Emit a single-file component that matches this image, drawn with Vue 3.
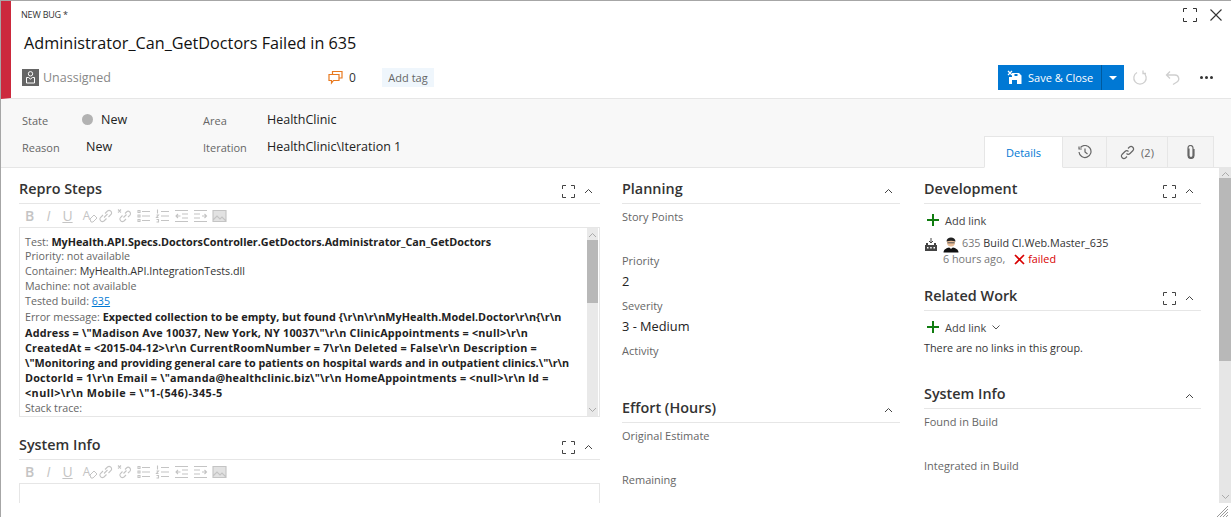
<template>
  <div class="form">
    <header class="head">
      <div class="kind-row">
        <span class="kind">NEW BUG *</span>
        <span class="win-btns">
          <svg width="14" height="14" viewBox="0 0 14 14"><path d="M.5 4V.5H4M10 .5h3.500V4M13.500 10v3.500H10M4 13.500H.5V10" fill="none" stroke="#333"/></svg>
          <svg width="12" height="12" viewBox="0 0 12 12"><path d="M.5.500l11 11M11.500.500l-11 11" fill="none" stroke="#333" stroke-width="1.100"/></svg>
        </span>
      </div>
      <h1 class="title">Administrator_Can_GetDoctors Failed in 635</h1>
      <div class="meta-row">
        <span class="assignee">
          <svg width="17" height="17" viewBox="0 0 17 17"><rect width="17" height="17" fill="#666"/><circle cx="8.500" cy="4.800" r="2.200" fill="none" stroke="#fff"/><path d="M4.500 8.500h2l2 1.500 2-1.500h2v5.500h-8z" fill="none" stroke="#fff"/></svg>
          <span>Unassigned</span>
        </span>
        <span class="comments">
          <svg width="15" height="15" viewBox="0 0 15 15"><path d="M4.500 4V1.500h9.500v6.500h-3M1 4.500h10v6H5.500L3.500 13v-2.500H1z" fill="none" stroke="#e8791f" stroke-width="1.200"/></svg>
          <span>0</span>
        </span>
        <span class="tag">Add tag</span>
        <span class="actions">
          <span class="save">
            <span class="save-main">
              <svg width="15" height="15" viewBox="0 0 15 15"><path d="M5 3h7l2.500 2.500V14H2V7h3z" fill="#fff"/><path d="M5 10h5v4H5zM7.500 4h3v2h-3z" fill="#0078d4"/><path d="M1 1l4 4M5 1L1 5" stroke="#fff" stroke-width="1.200"/></svg>
              Save &amp; Close
            </span>
            <span class="save-arrow"><i></i></span>
          </span>
          <svg class="act" width="16" height="16" viewBox="0 0 16 16"><path d="M11 2.500A6.200 6.200 0 1 1 5 2.500M11 .5v3h3" fill="none" stroke="#cfcfcf" stroke-width="1.300"/></svg>
          <svg class="act" width="16" height="16" viewBox="0 0 16 16"><path d="M5 1.500L1.500 5 5 8.500M2 5h8a3.800 3.800 0 0 1 2 7l-4 2.500" fill="none" stroke="#cfcfcf" stroke-width="1.300"/></svg>
          <span class="dots"><i></i><i></i><i></i></span>
        </span>
      </div>
    </header>

    <section class="band">
      <div class="fields">
        <span class="f-label">State</span>
        <span class="f-value state"><i class="dot"></i>New</span>
        <span class="f-label">Area</span>
        <span class="f-value">HealthClinic</span>
        <span class="f-label">Reason</span>
        <span class="f-value reason">New</span>
        <span class="f-label">Iteration</span>
        <span class="f-value">HealthClinic\Iteration 1</span>
      </div>
      <nav class="tabs">
        <span class="tab active">Details</span>
        <span class="tab hist">
          <svg width="14" height="14" viewBox="0 0 14 14"><path d="M2.500 2.500A6 6 0 1 1 1 7M1 1.500V4h2.800M7 3.500V7l2.500 2" fill="none" stroke="#666" stroke-width="1.200"/></svg>
        </span>
        <span class="tab links">
          <svg width="15" height="15" viewBox="0 0 15 15"><path d="M6.500 8.500a2.500 2.500 0 0 0 3.500 0l3-3A2.500 2.500 0 0 0 9.500 2L8 3.500M8.500 6.500a2.500 2.500 0 0 0-3.500 0l-3 3A2.500 2.500 0 0 0 5.500 13L7 11.500" fill="none" stroke="#666" stroke-width="1.200"/></svg>
          (2)
        </span>
        <span class="tab clip">
          <svg width="10" height="14" viewBox="0 0 10 14"><path d="M3 3.500v7a2 2 0 0 0 4 0V3a2.500 2.500 0 0 0-5 0v7.500a3 3 0 0 0 6 0V4" fill="none" stroke="#666" stroke-width="1.200"/></svg>
        </span>
      </nav>
    </section>

    <main class="body">
      <div class="columns">
        <div class="col">
          <section class="group">
            <div class="group-head">
              <h2>Repro Steps</h2>
              <svg class="expand" width="13" height="13" viewBox="0 0 13 13"><path d="M.5 4V.5H4M9 .5h3.500V4M12.500 9v3.500H9M4 12.500H.5V9" fill="none" stroke="#444"/></svg>
              <svg class="chev" width="9" height="6" viewBox="0 0 9 6"><path d="M1 5l3.500-3.500L8 5" fill="none" stroke="#444"/></svg>
            </div>
            <div class="toolbar">
              <b class="tb-b">B</b><i class="tb-i">I</i><u class="tb-u">U</u>
              <span class="tb-a">A<svg class="pen" width="9" height="9" viewBox="0 0 9 9"><path d="M1 5l4-4 3 3-4 4H2z" fill="#fff" stroke="#c4c4c4"/></svg></span>
              <svg v-for="(d, i) in toolIcons" :key="i" width="15" height="14" viewBox="0 0 15 14"><path :d="d" :fill="i === 6 ? '#e2e2e2' : 'none'" stroke="#c4c4c4" stroke-width="1.100"/></svg>
            </div>
            <div class="editor">
              <div class="editor-text">
                <div><span class="dim">Test:</span> <b>MyHealth.API.Specs.DoctorsController.GetDoctors.Administrator_Can_GetDoctors</b></div>
                <div><span class="dim">Priority:</span> <span class="dim">not available</span></div>
                <div><span class="dim">Container:</span> MyHealth.API.IntegrationTests.dll</div>
                <div><span class="dim">Machine:</span> <span class="dim">not available</span></div>
                <div><span class="dim">Tested build:</span> <a>635</a></div>
                <div><span class="dim">Error message:</span> <b class="wide1">Expected collection to be empty, but found {\r\n\r\nMyHealth.Model.Doctor\r\n{\r\n</b></div>
                <div><b class="wide3">Address = \"Madison Ave 10037, New York, NY 10037\"\r\n ClinicAppointments = &lt;null&gt;\r\n</b></div>
                <div><b class="wide3">CreatedAt = &lt;2015-04-12&gt;\r\n CurrentRoomNumber = 7\r\n Deleted = False\r\n Description =</b></div>
                <div><b>\"Monitoring and providing general care to patients on hospital wards and in outpatient clinics.\"\r\n</b></div>
                <div><b class="wide3">DoctorId = 1\r\n Email = \"amanda@healthclinic.biz\"\r\n HomeAppointments = &lt;null&gt;\r\n Id =</b></div>
                <div><b class="wide4">&lt;null&gt;\r\n Mobile = \"1-(546)-345-5</b></div>
                <div class="dim">Stack trace:</div>
              </div>
              <div class="mini-scroll">
                <svg class="sb-up" width="9" height="6" viewBox="0 0 9 6"><path d="M1 5l3.500-3.500L8 5" fill="none" stroke="#aaa"/></svg>
                <div class="mini-thumb"></div>
                <svg class="sb-down" width="9" height="6" viewBox="0 0 9 6"><path d="M1 1l3.500 3.500L8 1" fill="none" stroke="#aaa"/></svg>
              </div>
            </div>
          </section>
          <section class="group group-sys">
            <div class="group-head">
              <h2>System Info</h2>
              <svg class="expand" width="13" height="13" viewBox="0 0 13 13"><path d="M.5 4V.5H4M9 .5h3.500V4M12.500 9v3.500H9M4 12.500H.5V9" fill="none" stroke="#444"/></svg>
              <svg class="chev" width="9" height="6" viewBox="0 0 9 6"><path d="M1 5l3.500-3.500L8 5" fill="none" stroke="#444"/></svg>
            </div>
            <div class="toolbar">
              <b class="tb-b">B</b><i class="tb-i">I</i><u class="tb-u">U</u>
              <span class="tb-a">A<svg class="pen" width="9" height="9" viewBox="0 0 9 9"><path d="M1 5l4-4 3 3-4 4H2z" fill="#fff" stroke="#c4c4c4"/></svg></span>
              <svg v-for="(d, i) in toolIcons" :key="i" width="15" height="14" viewBox="0 0 15 14"><path :d="d" :fill="i === 6 ? '#e2e2e2' : 'none'" stroke="#c4c4c4" stroke-width="1.100"/></svg>
            </div>
            <div class="editor editor-empty"></div>
          </section>
        </div>

        <div class="col">
          <section class="group">
            <div class="group-head">
              <h2>Planning</h2>
              <svg class="chev" width="9" height="6" viewBox="0 0 9 6"><path d="M1 5l3.500-3.500L8 5" fill="none" stroke="#444"/></svg>
            </div>
            <div class="plan">
              <div class="plan-label">Story Points</div>
              <div class="plan-value"></div>
              <div class="plan-label">Priority</div>
              <div class="plan-value">2</div>
              <div class="plan-label">Severity</div>
              <div class="plan-value">3 - Medium</div>
              <div class="plan-label">Activity</div>
            </div>
          </section>
          <section class="group group-effort">
            <div class="group-head">
              <h2>Effort (Hours)</h2>
              <svg class="chev" width="9" height="6" viewBox="0 0 9 6"><path d="M1 5l3.500-3.500L8 5" fill="none" stroke="#444"/></svg>
            </div>
            <div class="plan">
              <div class="plan-label">Original Estimate</div>
              <div class="plan-value"></div>
              <div class="plan-label">Remaining</div>
            </div>
          </section>
        </div>

        <div class="col col-right">
          <section class="group">
            <div class="group-head">
              <h2>Development</h2>
              <svg class="expand" width="13" height="13" viewBox="0 0 13 13"><path d="M.5 4V.5H4M9 .5h3.500V4M12.500 9v3.500H9M4 12.500H.5V9" fill="none" stroke="#444"/></svg>
              <svg class="chev" width="9" height="6" viewBox="0 0 9 6"><path d="M1 5l3.500-3.500L8 5" fill="none" stroke="#444"/></svg>
            </div>
            <div class="add-link">
              <svg width="12" height="12" viewBox="0 0 12 12"><path d="M6 0v12M0 6h12" stroke="#107c10" stroke-width="2"/></svg>
              <span>Add link</span>
            </div>
            <div class="build">
              <svg class="build-ico" width="12" height="13" viewBox="0 0 12 13"><path d="M0 7h12v6H0z" fill="#444"/><path d="M1 5h2v2H1zM9 5h2v2H9z" fill="#444"/><path d="M6 0v5M4 3l2 2 2-2" fill="none" stroke="#444"/><path d="M2 9h1.500v1.500H2zM5.200 9h1.500v1.500H5.200zM8.500 9H10v1.500H8.500z" fill="#fff"/></svg>
              <svg class="avatar" width="16" height="17" viewBox="0 0 16 17"><path d="M.5 16.500c0-3 3-5 7.500-5s7.500 2 7.500 5z" fill="#111"/><path d="M6 11h4l-2 2z" fill="#fff"/><circle cx="8" cy="6.500" r="4" fill="#e8bd98"/><path d="M3.500 5.500C3.500 0 12.500 0 12.500 5.500c-3-1-6-1-9 0z" fill="#222"/><path d="M4.500 6.800h7" stroke="#555"/></svg>
              <div class="build-text">
                <div><span class="dim2">635</span> Build CI.Web.Master_635</div>
                <div class="build-sub">
                  <span class="dim2">6 hours ago,</span>
                  <svg width="11" height="11" viewBox="0 0 11 11"><path d="M1 1l9 9M10 1l-9 9" stroke="#d80000" stroke-width="1.700"/></svg>
                  <span class="failed">failed</span>
                </div>
              </div>
            </div>
          </section>
          <section class="group group-related">
            <div class="group-head">
              <h2>Related Work</h2>
              <svg class="expand" width="13" height="13" viewBox="0 0 13 13"><path d="M.5 4V.5H4M9 .5h3.500V4M12.500 9v3.500H9M4 12.500H.5V9" fill="none" stroke="#444"/></svg>
              <svg class="chev" width="9" height="6" viewBox="0 0 9 6"><path d="M1 5l3.500-3.500L8 5" fill="none" stroke="#444"/></svg>
            </div>
            <div class="add-link">
              <svg width="12" height="12" viewBox="0 0 12 12"><path d="M6 0v12M0 6h12" stroke="#107c10" stroke-width="2"/></svg>
              <span>Add link</span>
              <svg width="8" height="5" viewBox="0 0 8 5"><path d="M.5.500L4 4 7.500.500" fill="none" stroke="#555"/></svg>
            </div>
            <p class="no-links">There are no links in this group.</p>
          </section>
          <section class="group group-info">
            <div class="group-head">
              <h2>System Info</h2>
              <svg class="chev" width="9" height="6" viewBox="0 0 9 6"><path d="M1 5l3.500-3.500L8 5" fill="none" stroke="#444"/></svg>
            </div>
            <div class="plan">
              <div class="plan-label">Found in Build</div>
              <div class="plan-value"></div>
              <div class="plan-label">Integrated in Build</div>
            </div>
          </section>
        </div>
      </div>
      <div class="page-scroll">
        <svg width="9" height="6" viewBox="0 0 9 6"><path d="M1 5l3.500-3.500L8 5" fill="none" stroke="#aaa"/></svg>
        <div class="page-thumb"></div>
        <svg class="sb-down" width="9" height="6" viewBox="0 0 9 6"><path d="M1 1l3.500 3.500L8 1" fill="none" stroke="#aaa"/></svg>
      </div>
    </main>
    <footer class="foot">
      <svg width="11" height="11" viewBox="0 0 11 11"><path d="M0 11L11 0M3 11l8-8M6 11l5-5M9 11l2-2" stroke="#999"/></svg>
    </footer>
  </div>
</template>

<script setup>
const toolIcons = [
  'M6 8.500L9.500 5M5 6L2.500 8.500a2.500 2.500 0 0 0 3.500 3.500L8.500 9.500M7 4.500L9.500 2a2.500 2.500 0 0 1 3.500 3.500L10.500 8',
  'M1 .5l3 3M4 .5l-3 3M6.500 8.500L9.500 5.500M5.500 6.500L3.500 8.500a2.500 2.500 0 0 0 3.500 3.500L9 10M8 4.500L9.500 3a2.300 2.300 0 0 1 3.300 3.300L11 8',
  'M2 1.500h2v2H2zM2 6h2v2H2zM2 10.500h2v2H2zM6 2.500h8M6 7h8M6 11.500h8',
  'M2.500 .5v4M1.500 6h2L1.500 8.500h2M1.500 10.500h2v2.500h-2M6 2.500h8M6 7h8M6 11.500h8',
  'M1 1.500h13M8 5h6M8 9h6M1 12.500h13M6.500 7H2M4 5L2 7l2 2',
  'M1 1.500h13M1 5h6M1 9h6M1 12.500h13M9 7h4.500M11.500 5l2 2-2 2',
  'M1 1.500h13v11H1zM1 11l4-4 3 3 2-2 4 4'
]
</script>

<style>
html, body {
  margin: 0;
  background: #fff;
  overflow: hidden;
}
</style>

<style scoped>
.form {
  width: 1231px;
  height: 517px;
  box-sizing: border-box;
  border-top: 1px solid #a6a6a6;
  border-left: 1px solid #a6a6a6;
  font-family: "Open Sans", "Noto Sans", sans-serif;
  font-size: 12px;
  color: #222;
  display: flex;
  flex-direction: column;
  overflow: hidden;
}
svg { display: block; flex: none; }

.head {
  height: 98px;
  flex: none;
  box-sizing: border-box;
  border-left: 10px solid #cc293d;
  border-bottom: 1px solid #e6e6e6;
  padding: 0 9px;
}
.kind-row {
  height: 28px;
  display: flex;
  align-items: center;
  justify-content: space-between;
}
.kind { font-size: 9px; color: #333; letter-spacing: -0.2px; margin: -1px 0 0 1px; }
.win-btns { display: flex; align-items: center; gap: 13px; margin-top: -1px; }
.title {
  margin: 0 0 0 4px;
  font-size: 16.2px;
  font-weight: 400;
  color: #111;
  line-height: 28px;
}
.meta-row {
  display: flex;
  align-items: center;
  height: 25px;
  margin-top: 8px;
}
.assignee {
  display: flex;
  align-items: center;
  gap: 4px;
  margin-left: 2px;
  width: 306px;
  color: #888;
  font-size: 12.5px;
}
.comments { display: flex; align-items: center; gap: 6px; width: 54px; color: #333; }
.tag {
  background: #eff6fc;
  color: #666;
  font-size: 11px;
  width: 52px;
  text-align: center;
  height: 19px;
  line-height: 19px;
}
.actions {
  margin-left: auto;
  display: flex;
  align-items: center;
}
.save {
  display: flex;
  height: 25px;
  background: #0078d4;
  color: #fff;
  font-size: 11px;
  margin-right: 8px;
}
.save-main {
  width: 104px;
  box-sizing: border-box;
  display: flex;
  align-items: center;
  gap: 6px;
  padding-left: 9px;
  border-right: 1px solid #005a9e;
  white-space: nowrap;
}
.save-arrow {
  width: 22px;
  display: flex;
  align-items: center;
  justify-content: center;
}
.save-arrow i {
  border-left: 4px solid transparent;
  border-right: 4px solid transparent;
  border-top: 4px solid #fff;
}
.act { margin-right: 17px; }
.dots { display: flex; gap: 2px; margin: 0 9px 0 2px; }
.dots i { width: 3px; height: 3px; border-radius: 50%; background: #333; }

.band {
  height: 69px;
  flex: none;
  box-sizing: border-box;
  background: #f8f8f8;
  border-bottom: 1px solid #e6e6e6;
  display: flex;
  justify-content: space-between;
}
.fields {
  display: grid;
  grid-template-columns: 60px 121px 64px auto;
  grid-auto-rows: 27px;
  padding: 7px 0 0 21px;
  align-items: center;
}
.f-label { font-size: 11px; color: #666; padding-top: 2px; }
.f-value { font-size: 12.5px; color: #222; }
.state { display: flex; align-items: center; gap: 8px; }
.dot { width: 11px; height: 11px; border-radius: 50%; background: #b2b2b2; }
.reason { padding-left: 4px; }
.tabs {
  display: flex;
  align-self: flex-end;
  margin-right: 17px;
  height: 32px;
  margin-bottom: -1px;
}
.tab {
  height: 31px;
  box-sizing: border-box;
  display: flex;
  align-items: center;
  justify-content: center;
  gap: 6px;
  background: #f4f4f4;
  border: 1px solid #e6e6e6;
  border-left: none;
  border-bottom: none;
  color: #666;
  font-size: 11px;
}
.tab.active {
  width: 79px;
  height: 32px;
  background: #fff;
  color: #0078d4;
  border-left: 1px solid #e6e6e6;
  border-bottom: 1px solid #fff;
}
.tab.hist { width: 44px; }
.tab.links { width: 61px; }
.tab.clip { width: 46px; }

.body {
  flex: 1;
  min-height: 0;
  display: flex;
  overflow: hidden;
}
.columns {
  flex: 1;
  min-width: 0;
  display: grid;
  grid-template-columns: 581px 278px 279px;
  column-gap: 22px;
  align-items: start;
  padding: 9px 0 0 18px;
}
.col-right { margin-left: 2px; }

.group-head {
  display: flex;
  align-items: center;
  height: 27px;
  box-sizing: border-box;
  padding-bottom: 3px;
  border-bottom: 1px solid #e6e6e6;
}
.group-head h2 {
  margin: 0;
  font-size: 14.4px;
  font-weight: 600;
  color: #333;
  flex: 1;
}
.expand { margin: 5px 9px 0 0; }
.chev { margin: 5px 7px 0 0; }

.toolbar {
  display: grid;
  grid-auto-flow: column;
  grid-auto-columns: 19px;
  justify-content: start;
  justify-items: center;
  align-items: center;
  height: 23px;
  padding-left: 1px;
  color: #c4c4c4;
  font-size: 14px;
}
.toolbar b, .toolbar i, .toolbar u { font-weight: 400; }
.toolbar .tb-b { font-weight: 600; }
.tb-a { position: relative; font-size: 12px; }
.pen { position: absolute; left: 6px; top: 7px; }
.editor {
  display: flex;
  height: 190px;
  box-sizing: border-box;
  border: 1px solid #e6e6e6;
  padding-right: 1px;
}
.editor-text {
  flex: 1;
  padding: 5.5px 0 0 5px;
  font-size: 10.7px;
  line-height: 15.2px;
  color: #333;
  overflow: hidden;
  white-space: nowrap;
}
.editor-text > div { height: 15.2px; }
.editor-text b { color: #222; font-weight: 700; font-size: 10.8px; }
.editor-text .wide1 { letter-spacing: 0.05px; }
.editor-text .wide3 { letter-spacing: 0.2px; }
.editor-text .wide4 { letter-spacing: 0.45px; }
.dim { color: #666; }
.editor-text a { color: #0078d4; text-decoration: underline; }
.mini-scroll {
  width: 11px;
  background: #e9e9e9;
  display: flex;
  flex-direction: column;
  align-items: center;
}
.sb-up { margin: 4px 0 2px; }
.sb-down { margin-top: auto; margin-bottom: 3px; }
.mini-thumb { width: 100%; height: 63px; background: #b8b8b8; }
.group-sys { margin-top: 16px; }
.editor-empty { height: 60px; }

.plan { padding-top: 4px; }
.plan-label { font-size: 11px; color: #666; height: 17px; line-height: 17px; }
.plan-value { font-size: 12.8px; color: #222; height: 28px; line-height: 25px; }
.plan-value:empty { height: 27px; }
.group-effort { margin-top: 37px; }

.add-link {
  display: flex;
  align-items: center;
  gap: 6px;
  height: 30px;
  box-sizing: border-box;
  padding: 2px 0 0 3px;
  font-size: 11px;
  color: #444;
}
.build { display: flex; align-items: flex-start; margin-top: 1px; font-size: 10.8px; color: #333; line-height: 16px; }
.build-ico { margin: 3px 6px 0 1px; }
.avatar { margin: 1px 3px 0 0; }
.build-sub { display: flex; align-items: center; gap: 3px; margin-left: -19px; }
.build-sub svg { margin-left: 6px; }
.dim2 { color: #777; }
.failed { color: #d80000; }
.group-related { margin-top: 17px; }
.no-links { margin: -1px 0 0; font-size: 10.8px; color: #333; }
.group-info { margin-top: 27px; }

.page-scroll {
  width: 12px;
  flex: none;
  box-sizing: border-box;
  background: #e6e6e6;
  display: flex;
  flex-direction: column;
  align-items: center;
  padding-top: 3px;
}
.page-thumb { width: 100%; height: 183px; margin-top: 1px; background: #b8b8b8; }
.foot {
  height: 14px;
  flex: none;
  display: flex;
  justify-content: flex-end;
  align-items: flex-end;
  padding-right: 3px;
}
</style>
